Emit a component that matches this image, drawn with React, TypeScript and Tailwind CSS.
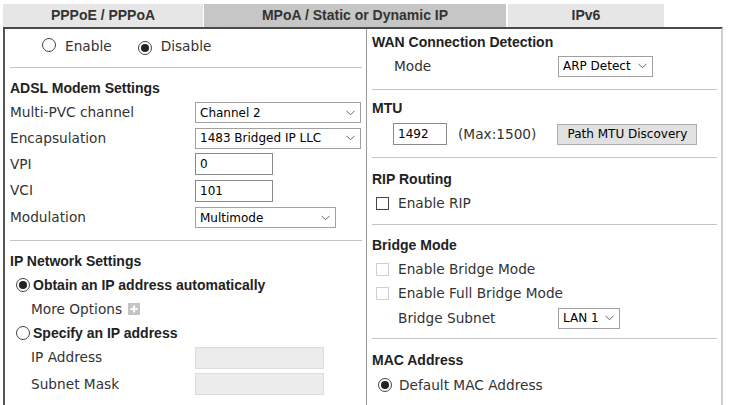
import React from "react";

const lbl = "font-['DejaVu_Sans',sans-serif] text-[13.7px] text-[#333]";
const head = "font-['Liberation_Sans',Arial,sans-serif] font-bold text-[14px] text-[#222]";
const tab = "font-['Liberation_Sans',Arial,sans-serif] font-bold text-[14px] text-[#333]";
const ctl = "font-['DejaVu_Sans',sans-serif] text-[12px] text-black";

function Radio({ checked }: { checked?: boolean }) {
  return (
    <span className="inline-flex h-[14px] w-[14px] shrink-0 items-center justify-center rounded-full border border-[#444] bg-white">
      {checked && <span className="h-[8px] w-[8px] rounded-full bg-[#222]" />}
    </span>
  );
}

function Check({ disabled }: { disabled?: boolean }) {
  return (
    <span
      className={
        "inline-block h-[13px] w-[13px] shrink-0 border bg-white " +
        (disabled ? "border-[#d0d0d0]" : "border-[#444]")
      }
    />
  );
}

function Chevron() {
  return (
    <svg width="9" height="6" viewBox="0 0 9 6" className="shrink-0">
      <path d="M0.5 0.8 L4.5 4.8 L8.5 0.8" fill="none" stroke="#666" strokeWidth="1" />
    </svg>
  );
}

function Select({ value, w }: { value: string; w: string }) {
  return (
    <div className={"flex h-[21px] items-center justify-between border border-[#a0a0a0] bg-white pl-[4px] pr-[5px] " + w}>
      <span className={ctl}>{value}</span>
      <Chevron />
    </div>
  );
}

function Input({ value, w, disabled }: { value?: string; w: string; disabled?: boolean }) {
  return (
    <div
      className={
        "flex h-[22px] items-center pl-[4px] " +
        (disabled ? "border border-[#dcdcdc] bg-[#ececec] " : "border border-[#8a8a8a] bg-white ") +
        w
      }
    >
      <span className={ctl}>{value}</span>
    </div>
  );
}

function Sep() {
  return <div className="h-px bg-[#c4c4c4]" />;
}

export default function App() {
  return (
    <div className="h-[405px] w-[733px] overflow-hidden bg-white">
      {/* Tabs */}
      <div className="flex h-[27px] items-end pl-[3px] pt-[4px]">
        <div className={"flex h-[23px] w-[200px] items-center justify-center bg-[#e6e6e6] " + tab}>
          PPPoE / PPPoA
        </div>
        <div className={"ml-[1px] flex h-[23px] w-[302px] items-center justify-center bg-[#c6c6c6] " + tab}>
          MPoA / Static or Dynamic IP
        </div>
        <div className={"ml-[2px] flex h-[23px] w-[156px] items-center justify-center bg-[#e6e6e6] " + tab}>
          IPv6
        </div>
      </div>

      {/* Panel */}
      <div className="ml-[3px] flex h-[378px] w-[720px] border-l-[2px] border-t-[2px] border-r-[2px] border-l-[#555] border-t-[#4a4a4a] border-r-[#cfcfcf]">
        {/* Left column */}
        <div className="flex w-[361px] flex-col pl-[5px] pr-[4px]">
          <div className="flex h-[34px] items-center">
            <span className="ml-[32px]"><Radio /></span>
            <span className={lbl + " ml-[9px]"}>Enable</span>
            <span className="ml-[26px]"><Radio checked /></span>
            <span className={lbl + " ml-[9px]"}>Disable</span>
          </div>
          <div className="mt-[4px]"><Sep /></div>
          <div className={"mt-[8px] flex h-[24px] items-center " + head}>ADSL Modem Settings</div>
          <div className="flex h-[25px] items-center">
            <span className={lbl + " w-[185px]"}>Multi-PVC channel</span>
            <Select value="Channel 2" w="w-[166px]" />
          </div>
          <div className="flex h-[26px] items-center">
            <span className={lbl + " w-[185px]"}>Encapsulation</span>
            <Select value="1483 Bridged IP LLC" w="w-[166px]" />
          </div>
          <div className="flex h-[26px] items-center">
            <span className={lbl + " w-[185px]"}>VPI</span>
            <Input value="0" w="w-[78px]" />
          </div>
          <div className="flex h-[27px] items-center">
            <span className={lbl + " w-[185px]"}>VCI</span>
            <Input value="101" w="w-[78px]" />
          </div>
          <div className="flex h-[27px] items-center">
            <span className={lbl + " w-[185px]"}>Modulation</span>
            <Select value="Multimode" w="w-[141px]" />
          </div>
          <div className="mt-[9px]"><Sep /></div>
          <div className={"mt-[8px] flex h-[24px] items-center " + head}>IP Network Settings</div>
          <div className="flex h-[24px] items-center pl-[6px]">
            <Radio checked />
            <span className={head + " ml-[3px]"}>Obtain an IP address automatically</span>
          </div>
          <div className="flex h-[24px] items-center pl-[21px]">
            <span className={lbl}>More Options</span>
            <span className="ml-[6px] flex h-[12px] w-[12px] items-center justify-center bg-[#c4c4c4]">
              <svg width="8" height="8" viewBox="0 0 8 8">
                <path d="M4 0.5 V7.5 M0.5 4 H7.5" stroke="#fff" strokeWidth="2" />
              </svg>
            </span>
          </div>
          <div className="flex h-[24px] items-center pl-[6px]">
            <Radio />
            <span className={head + " ml-[3px]"}>Specify an IP address</span>
          </div>
          <div className="flex h-[25px] items-center">
            <span className={lbl + " w-[185px] pl-[21px]"}>IP Address</span>
            <Input w="w-[129px]" disabled />
          </div>
          <div className="flex h-[28px] items-center">
            <span className={lbl + " w-[185px] pl-[21px]"}>Subnet Mask</span>
            <Input w="w-[129px]" disabled />
          </div>
        </div>

        {/* Divider */}
        <div className="w-px bg-[#9a9a9a]" />

        {/* Right column */}
        <div className="flex flex-1 flex-col pl-[5px] pr-[4px]">
          <div className={"mt-[1px] flex h-[24px] items-center " + head}>WAN Connection Detection</div>
          <div className="flex h-[24px] items-center">
            <span className={lbl + " w-[186px] pl-[22px]"}>Mode</span>
            <Select value="ARP Detect" w="w-[95px]" />
          </div>
          <div className="mt-[11px]"><Sep /></div>
          <div className={"mt-[6px] flex h-[24px] items-center " + head}>MTU</div>
          <div className="flex h-[28px] items-center">
            <span className="ml-[21px]"><Input value="1492" w="w-[54px]" /></span>
            <span className={lbl + " ml-[11px]"}>(Max:1500)</span>
            <span className={"ml-[21px] flex h-[21px] w-[140px] items-center justify-center border border-[#adadad] bg-[#e1e1e1] " + ctl}>
              Path MTU Discovery
            </span>
          </div>
          <div className="mt-[9px]"><Sep /></div>
          <div className={"mt-[9px] flex h-[24px] items-center " + head}>RIP Routing</div>
          <div className="flex h-[24px] items-center pl-[4px]">
            <Check />
            <span className={lbl + " ml-[9px]"}>Enable RIP</span>
          </div>
          <div className="mt-[9px]"><Sep /></div>
          <div className={"mt-[8px] flex h-[24px] items-center " + head}>Bridge Mode</div>
          <div className="flex h-[24px] items-center pl-[4px]">
            <Check disabled />
            <span className={lbl + " ml-[9px]"}>Enable Bridge Mode</span>
          </div>
          <div className="flex h-[25px] items-center pl-[4px]">
            <Check disabled />
            <span className={lbl + " ml-[9px]"}>Enable Full Bridge Mode</span>
          </div>
          <div className="flex h-[24px] items-center">
            <span className={lbl + " w-[186px] pl-[26px]"}>Bridge Subnet</span>
            <Select value="LAN 1" w="w-[62px]" />
          </div>
          <div className="mt-[8px]"><Sep /></div>
          <div className={"mt-[9px] flex h-[24px] items-center " + head}>MAC Address</div>
          <div className="flex h-[26px] items-center pl-[6px]">
            <Radio checked />
            <span className={lbl + " ml-[7px]"}>Default MAC Address</span>
          </div>
        </div>
      </div>
    </div>
  );
}
